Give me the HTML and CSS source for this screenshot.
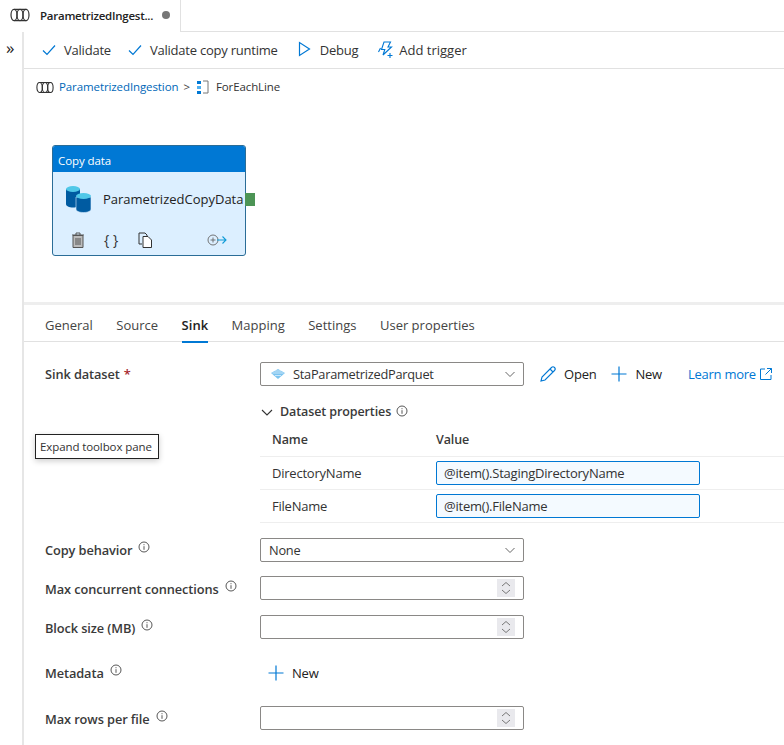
FILE: index.html
```html
<!DOCTYPE html>
<html lang="en">
<head>
<meta charset="utf-8">
<title>ParametrizedIngestion</title>
<link rel="stylesheet" href="styles.css">
</head>
<body>
<svg class="defs" width="0" height="0" aria-hidden="true">
  <symbol id="pipe" viewBox="0 0 20 14"><g fill="none" stroke="#333" stroke-width="1.2"><ellipse cx="4" cy="7" rx="3" ry="5.6"/><ellipse cx="10" cy="7" rx="3" ry="5.6"/><path d="M4 1.4h12.5M4 12.6h12.5"/><ellipse cx="16" cy="7" rx="3" ry="5.6"/></g></symbol>
  <symbol id="check" viewBox="0 0 14 12"><path d="M1 6.5l4 4L13 1.5" fill="none" stroke="#0078d4" stroke-width="1.2"/></symbol>
  <symbol id="plus" viewBox="0 0 16 16"><path d="M8 .5v15M.5 8h15" fill="none" stroke="#0078d4" stroke-width="1.2"/></symbol>
  <symbol id="chev" viewBox="0 0 12 7"><path d="M1.5 1l4.5 4.5L10.500 1" fill="none" stroke="#666" stroke-width="1"/></symbol>
  <symbol id="info" viewBox="0 0 12 12"><circle cx="6" cy="6" r="5" fill="none" stroke="#444" stroke-width=".9"/><path d="M6 5.200v3.600M6 3.200v1" stroke="#444" stroke-width=".9"/></symbol>
  <symbol id="spin" viewBox="0 0 18 18"><rect width="18" height="18" fill="#e9e9ed"/><path d="M5 7l4-3.500L13 7M5 11l4 3.500L13 11" fill="none" stroke="#777" stroke-width="1"/></symbol>
</svg>

<header class="tabbar">
  <div class="doc-tab">
    <svg class="ic-pipe"><use href="#pipe"/></svg>
    <span class="doc-title">ParametrizedIngest...</span>
    <span class="dot"></span>
  </div>
</header>

<div class="main">
  <aside class="rail"><span class="rail-btn">»</span></aside>
  <div class="content">
    <nav class="toolbar">
      <span class="tool"><svg class="ic-check"><use href="#check"/></svg>Validate</span>
      <span class="tool"><svg class="ic-check"><use href="#check"/></svg>Validate copy runtime</span>
      <span class="tool tool-debug"><svg class="ic-debug" viewBox="0 0 13 16"><path d="M1.500 1.500v13L11.500 8z" fill="none" stroke="#0078d4" stroke-width="1.200"/></svg>Debug</span>
      <span class="tool tool-trigger"><svg class="ic-trigger" viewBox="0 0 17 18"><path d="M7 1h6.500l-2.500 5h3.500L6 14l1.800-5.500H4.500z M1.500 11l2-4" fill="none" stroke="#0078d4" stroke-width="1.100"/><path d="M13 12v5M10.500 14.500h5" stroke="#0078d4" stroke-width="1.100"/></svg>Add trigger</span>
    </nav>
    <div class="crumbs">
      <svg class="ic-pipe-sm"><use href="#pipe"/></svg>
      <a class="crumb-link">ParametrizedIngestion</a>
      <span class="crumb-sep">&gt;</span>
      <svg class="ic-foreach" viewBox="0 0 12 14"><rect x="0" y="1" width="4" height="3" fill="#0078d4"/><rect x="0" y="6" width="4" height="3" fill="#50b0f0"/><rect x="0" y="11" width="4" height="3" fill="#0078d4"/><path d="M6 1h5v12H6" fill="none" stroke="#777" stroke-width="1"/></svg>
      <span class="crumb-cur">ForEachLine</span>
    </div>

    <section class="canvas">
      <div class="node">
        <div class="node-head">Copy data</div>
        <div class="node-body">
          <svg class="ic-db" viewBox="0 0 26 28">
            <path d="M0 4v15c0 2 3 3.500 7 3.500s7-1.500 7-3.500V4z" fill="#005ba1"/>
            <ellipse cx="7" cy="4" rx="7" ry="3" fill="#50c8e8"/>
            <path d="M10 12v12c0 2 3 3.500 7.500 3.500S25 26 25 24V12z" fill="#005ba1" stroke="#dcefff" stroke-width=".6"/>
            <ellipse cx="17.500" cy="11" rx="7.500" ry="3" fill="#50c8e8"/>
          </svg>
          <span class="node-name">ParametrizedCopyData</span>
        </div>
        <div class="node-actions">
          <svg class="ic-trash" viewBox="0 0 14 16"><path d="M1 3h12M5 3V1h4v2" fill="none" stroke="#555" stroke-width="1"/><path d="M2 3.500h10V15.500H2z" fill="#bbb" stroke="#555" stroke-width="1"/><path d="M5 6v7M7 6v7M9 6v7" stroke="#555" stroke-width="1"/></svg>
          <span class="ic-braces">{ }</span>
          <svg class="ic-copy" viewBox="0 0 15 16"><path d="M4 12H1V1h6l2 2v1" fill="none" stroke="#333" stroke-width="1"/><path d="M5 4.500h5l3.500 3.500v7.500H5z" fill="#fff" stroke="#333" stroke-width="1"/></svg>
          <svg class="ic-next" viewBox="0 0 20 12"><circle cx="6" cy="6" r="5" fill="none" stroke="#666" stroke-width=".9"/><path d="M3.500 6h5M6 3.500v5" stroke="#666" stroke-width=".9"/><path d="M10 6h9M15.500 2.500L19 6l-3.500 3.500" fill="none" stroke="#0f9bd7" stroke-width="1.100"/></svg>
        </div>
        <span class="node-port"></span>
      </div>
    </section>

    <section class="panel">
      <div class="tabs">
        <span class="tab">General</span>
        <span class="tab">Source</span>
        <span class="tab tab-on">Sink</span>
        <span class="tab">Mapping</span>
        <span class="tab">Settings</span>
        <span class="tab">User properties</span>
      </div>
      <div class="form">
        <div class="row row-sink">
          <label class="lbl lbl-b lbl-top">Sink dataset <b class="req">*</b></label>
          <div class="select">
            <svg class="ic-parquet" viewBox="0 0 14 10"><path d="M7 0l7 4-7 6-7-6z" fill="#7cc4f0"/><path d="M3.500 2l7 0M1.500 4h11M4 6.500h6" stroke="#fff" stroke-width=".6"/></svg>
            <span class="select-txt">StaParametrizedParquet</span>
            <svg class="ic-chev"><use href="#chev"/></svg>
          </div>
          <span class="act act-open"><svg class="ic-pen" viewBox="0 0 16 16"><path d="M1 15l1-4L11.500 1.500a1.500 1.500 0 0 1 3 3L5 14z M10 3l3 3" fill="none" stroke="#0078d4" stroke-width="1.100"/></svg>Open</span>
          <span class="act act-new"><svg class="ic-plus"><use href="#plus"/></svg>New</span>
          <a class="learn">Learn more<svg class="ic-ext" viewBox="0 0 12 12"><path d="M5 1H.5v10.500H11V7M7 .5h4.500V5M11.500 .5L5.500 6.500" fill="none" stroke="#0078d4" stroke-width="1"/></svg></a>
        </div>

        <div class="ds">
          <div class="ds-head"><svg class="ic-ds" viewBox="0 0 12 7"><path d="M1 1l5 5 5-5" fill="none" stroke="#333" stroke-width="1.100"/></svg><span class="ds-title">Dataset properties</span><svg class="ic-info ds-info"><use href="#info"/></svg></div>
          <div class="ds-row ds-th"><span class="ds-name">Name</span><span>Value</span></div>
          <div class="ds-row"><span class="ds-name">DirectoryName</span><span class="val">@item().StagingDirectoryName</span></div>
          <div class="ds-row"><span class="ds-name">FileName</span><span class="val">@item().FileName</span></div>
        </div>

        <div class="row row-behav">
          <label class="lbl lbl-b">Copy behavior<svg class="ic-info"><use href="#info"/></svg></label>
          <div class="select"><span class="select-txt none">None</span><svg class="ic-chev"><use href="#chev"/></svg></div>
        </div>
        <div class="row row-conc">
          <label class="lbl lbl-b lbl-low">Max concurrent connections<svg class="ic-info"><use href="#info"/></svg></label>
          <div class="num"><svg class="ic-spin"><use href="#spin"/></svg></div>
        </div>
        <div class="row row-block">
          <label class="lbl lbl-b lbl-low">Block size (MB)<svg class="ic-info"><use href="#info"/></svg></label>
          <div class="num"><svg class="ic-spin"><use href="#spin"/></svg></div>
        </div>
        <div class="row row-meta">
          <label class="lbl lbl-b">Metadata<svg class="ic-info"><use href="#info"/></svg></label>
          <span class="act act-meta"><svg class="ic-plus"><use href="#plus"/></svg>New</span>
        </div>
        <div class="row row-rows">
          <label class="lbl lbl-b lbl-low">Max rows per file<svg class="ic-info"><use href="#info"/></svg></label>
          <div class="num"><svg class="ic-spin"><use href="#spin"/></svg></div>
        </div>
      </div>
    </section>
  </div>
</div>
<div class="tooltip">Expand toolbox pane</div>
</body>
</html>
```

FILE: styles.css
```css
* { box-sizing: border-box; }
html, body { margin: 0; height: 100%; overflow: hidden; }
body {
  position: relative;
  width: 784px; height: 745px;
  background: #fff; color: #252423;
  font: 13px/18px "Open Sans", "Noto Sans", sans-serif;
  letter-spacing: -0.22px;
}
.defs { position: absolute; }
.tabbar { height: 32px; border-bottom: 1px solid #e1e1e1; display: flex; }
.doc-tab {
  width: 181px; height: 32px; background: #fff;
  border-right: 1px solid #e1e1e1;
  display: flex; align-items: center; padding-left: 10px;
}
.ic-pipe { width: 20px; height: 14px; margin-right: 10px; flex: none; margin-top: -2px; }
.doc-title { font-size: 11.500px; font-weight: 600; letter-spacing: -0.25px; color: #222; margin-top: -1px; white-space: nowrap; }
.dot { width: 8px; height: 8px; border-radius: 50%; background: #777; margin-left: 9px; margin-top: -2px; flex: none; }
.main { display: flex; height: 713px; }
.rail { width: 24px; border-right: 2px solid #e6e6e6; flex: none; text-align: center; }
.rail-btn { display: block; font-size: 17px; line-height: 32px; color: #222; margin-right: 2px; }
.content { flex: 1; min-width: 0; }
.toolbar {
  height: 37px; border-bottom: 1px solid #e1e1e1;
  display: flex; align-items: center; padding-left: 18px;
}
.tool { display: flex; align-items: center; color: #333; margin-right: 17px; white-space: nowrap; }
.ic-check { width: 14px; height: 12px; margin-right: 8px; }
.tool-debug { margin-left: 3px; }
.ic-debug { width: 13px; height: 16px; margin-right: 9px; margin-top: -3px; }
.tool-trigger { margin-right: 0; letter-spacing: 0; margin-left: 2px; }
.ic-trigger { width: 17px; height: 18px; margin-right: 5px; }
.crumbs { height: 36px; display: flex; align-items: center; padding-left: 12px; font-size: 11.500px; letter-spacing: -0.1px; }
.ic-pipe-sm { width: 18px; height: 13px; margin-right: 5px; }
.crumb-link { color: #0067b8; }
.crumb-sep { margin: 0 7px 0 5px; color: #444; }
.ic-foreach { width: 12px; height: 14px; margin-right: 7px; }
.crumb-cur { color: #333; }
.canvas { position: relative; height: 200px; border-bottom: 3px solid #eee; }
.node {
  position: absolute; left: 28px; top: 40px;
  width: 194px; height: 111px;
  border: 1px solid #2b6d97; border-radius: 3px;
  background: #dcefff;
}
.node-head { height: 26px; background: #0078d4; color: #fff; font-size: 11.500px; line-height: 29px; padding-left: 5px; letter-spacing: -0.1px; border-radius: 2px 2px 0 0; }
.node-body { display: flex; align-items: center; height: 53px; padding-left: 13px; }
.ic-db { width: 26px; height: 28px; margin-right: 11px; flex: none; }
.node-name { white-space: nowrap; font-size: 13px; letter-spacing: 0; color: #222; }
.node-actions { display: flex; align-items: center; height: 30px; padding-left: 18px; }
.ic-trash { width: 14px; height: 16px; margin-right: 19px; }
.ic-braces { font-size: 14px; width: 16px; margin-right: 18px; color: #333; letter-spacing: 0; white-space: nowrap; font-weight: 400; }
.ic-copy { width: 15px; height: 16px; margin-right: 54px; }
.ic-next { width: 20px; height: 12px; }
.node-port { position: absolute; left: 192px; top: 47px; width: 10px; height: 13px; background: #4c9455; }
.tabs { height: 37px; border-bottom: 1px solid #e1e1e1; display: flex; padding-left: 21px; }
.tab { margin-right: 23.500px; height: 38px; line-height: 40px; color: #444; white-space: nowrap; font-size: 13px; letter-spacing: 0; }
.tab-on { color: #222; font-weight: 600; border-bottom: 2px solid #0078d4; }
.form { padding-left: 21px; }
.row { display: flex; align-items: center; white-space: nowrap; }
.lbl { width: 215px; flex: none; color: #333; display: flex; }
.lbl-b { font-weight: 600; font-size: 12.800px; letter-spacing: -0.1px; color: #3a3a3a; }
.lbl-low { padding-top: 2px; }
.lbl-top { margin-top: -1px; }
.req { color: #a4262c; font-weight: 600; margin-left: 4px; }
.ic-info { width: 12px; height: 12px; margin: -1px 0 0 6px; }
.lbl .ic-info { margin-top: 0; }
.select, .num {
  width: 264px; height: 24px; flex: none;
  border: 1px solid #8a8886; border-radius: 2px;
  display: flex; align-items: center;
}
.select { padding: 0 7px 0 10px; }
.ic-parquet { width: 14px; height: 10px; margin-right: 8px; flex: none; }
.select-txt { flex: 1; color: #333; font-size: 12.800px; letter-spacing: -0.26px; }
.select-txt.none { margin-left: -2px; }
.ic-chev { width: 12px; height: 7px; flex: none; }
.num { justify-content: flex-end; padding-right: 8px; }
.ic-spin { width: 18px; height: 18px; }
.act { display: flex; align-items: center; color: #222; }
.ic-pen { width: 16px; height: 16px; margin-right: 8px; }
.ic-plus { width: 16px; height: 16px; margin-right: 8px; }
.act-open { margin-left: 16px; }
.act-new { margin-left: 15px; }
.learn { display: flex; align-items: center; margin-left: 26px; color: #0078d4; letter-spacing: -0.26px; }
.ic-ext { width: 12px; height: 12px; margin-left: 4px; }
.row-sink { margin-top: 20px; }
.ds { margin-left: 215px; margin-top: 17px; width: 523px; margin-right: 0; }
.ds-head { display: flex; align-items: center; height: 18px; padding-left: 1px; }
.ic-ds { width: 12px; height: 7px; margin-right: 7px; margin-top: 1px; }
.ds-title { font-weight: 600; font-size: 12.500px; letter-spacing: -0.1px; color: #3a3a3a; }
.ds-info { margin-left: 5px; margin-top: -2px; }
.ds-row { display: flex; align-items: center; height: 33px; border-bottom: 1px solid #eee; color: #333; width: 524px; }
.ds-th { height: 36px; font-weight: 600; font-size: 12.500px; letter-spacing: -0.1px; color: #3a3a3a; padding-top: 2px; }
.ds-name { width: 176px; padding-left: 12px; flex: none; }
.val {
  width: 264px; height: 24px;
  border: 1px solid #0078d4; border-radius: 2px;
  background: #f4faff; padding-left: 7px; line-height: 22px; color: #333;
}
.row-behav { margin-top: 15px; }
.row-conc { margin-top: 14px; }
.row-block { margin-top: 15px; }
.row-meta { margin-top: 22px; height: 24px; }
.act-meta { margin-left: 8px; }
.row-rows { margin-top: 21px; }
.tooltip {
  position: absolute; left: 35px; top: 434px;
  width: 124px; height: 25px;
  border: 1px solid #222; background: #fff;
  font-size: 11.500px; line-height: 24px; padding-left: 4px; letter-spacing: -0.1px; color: #333;
  box-shadow: 0 2px 6px rgba(0,0,0,.2);
  white-space: nowrap;
}
```
